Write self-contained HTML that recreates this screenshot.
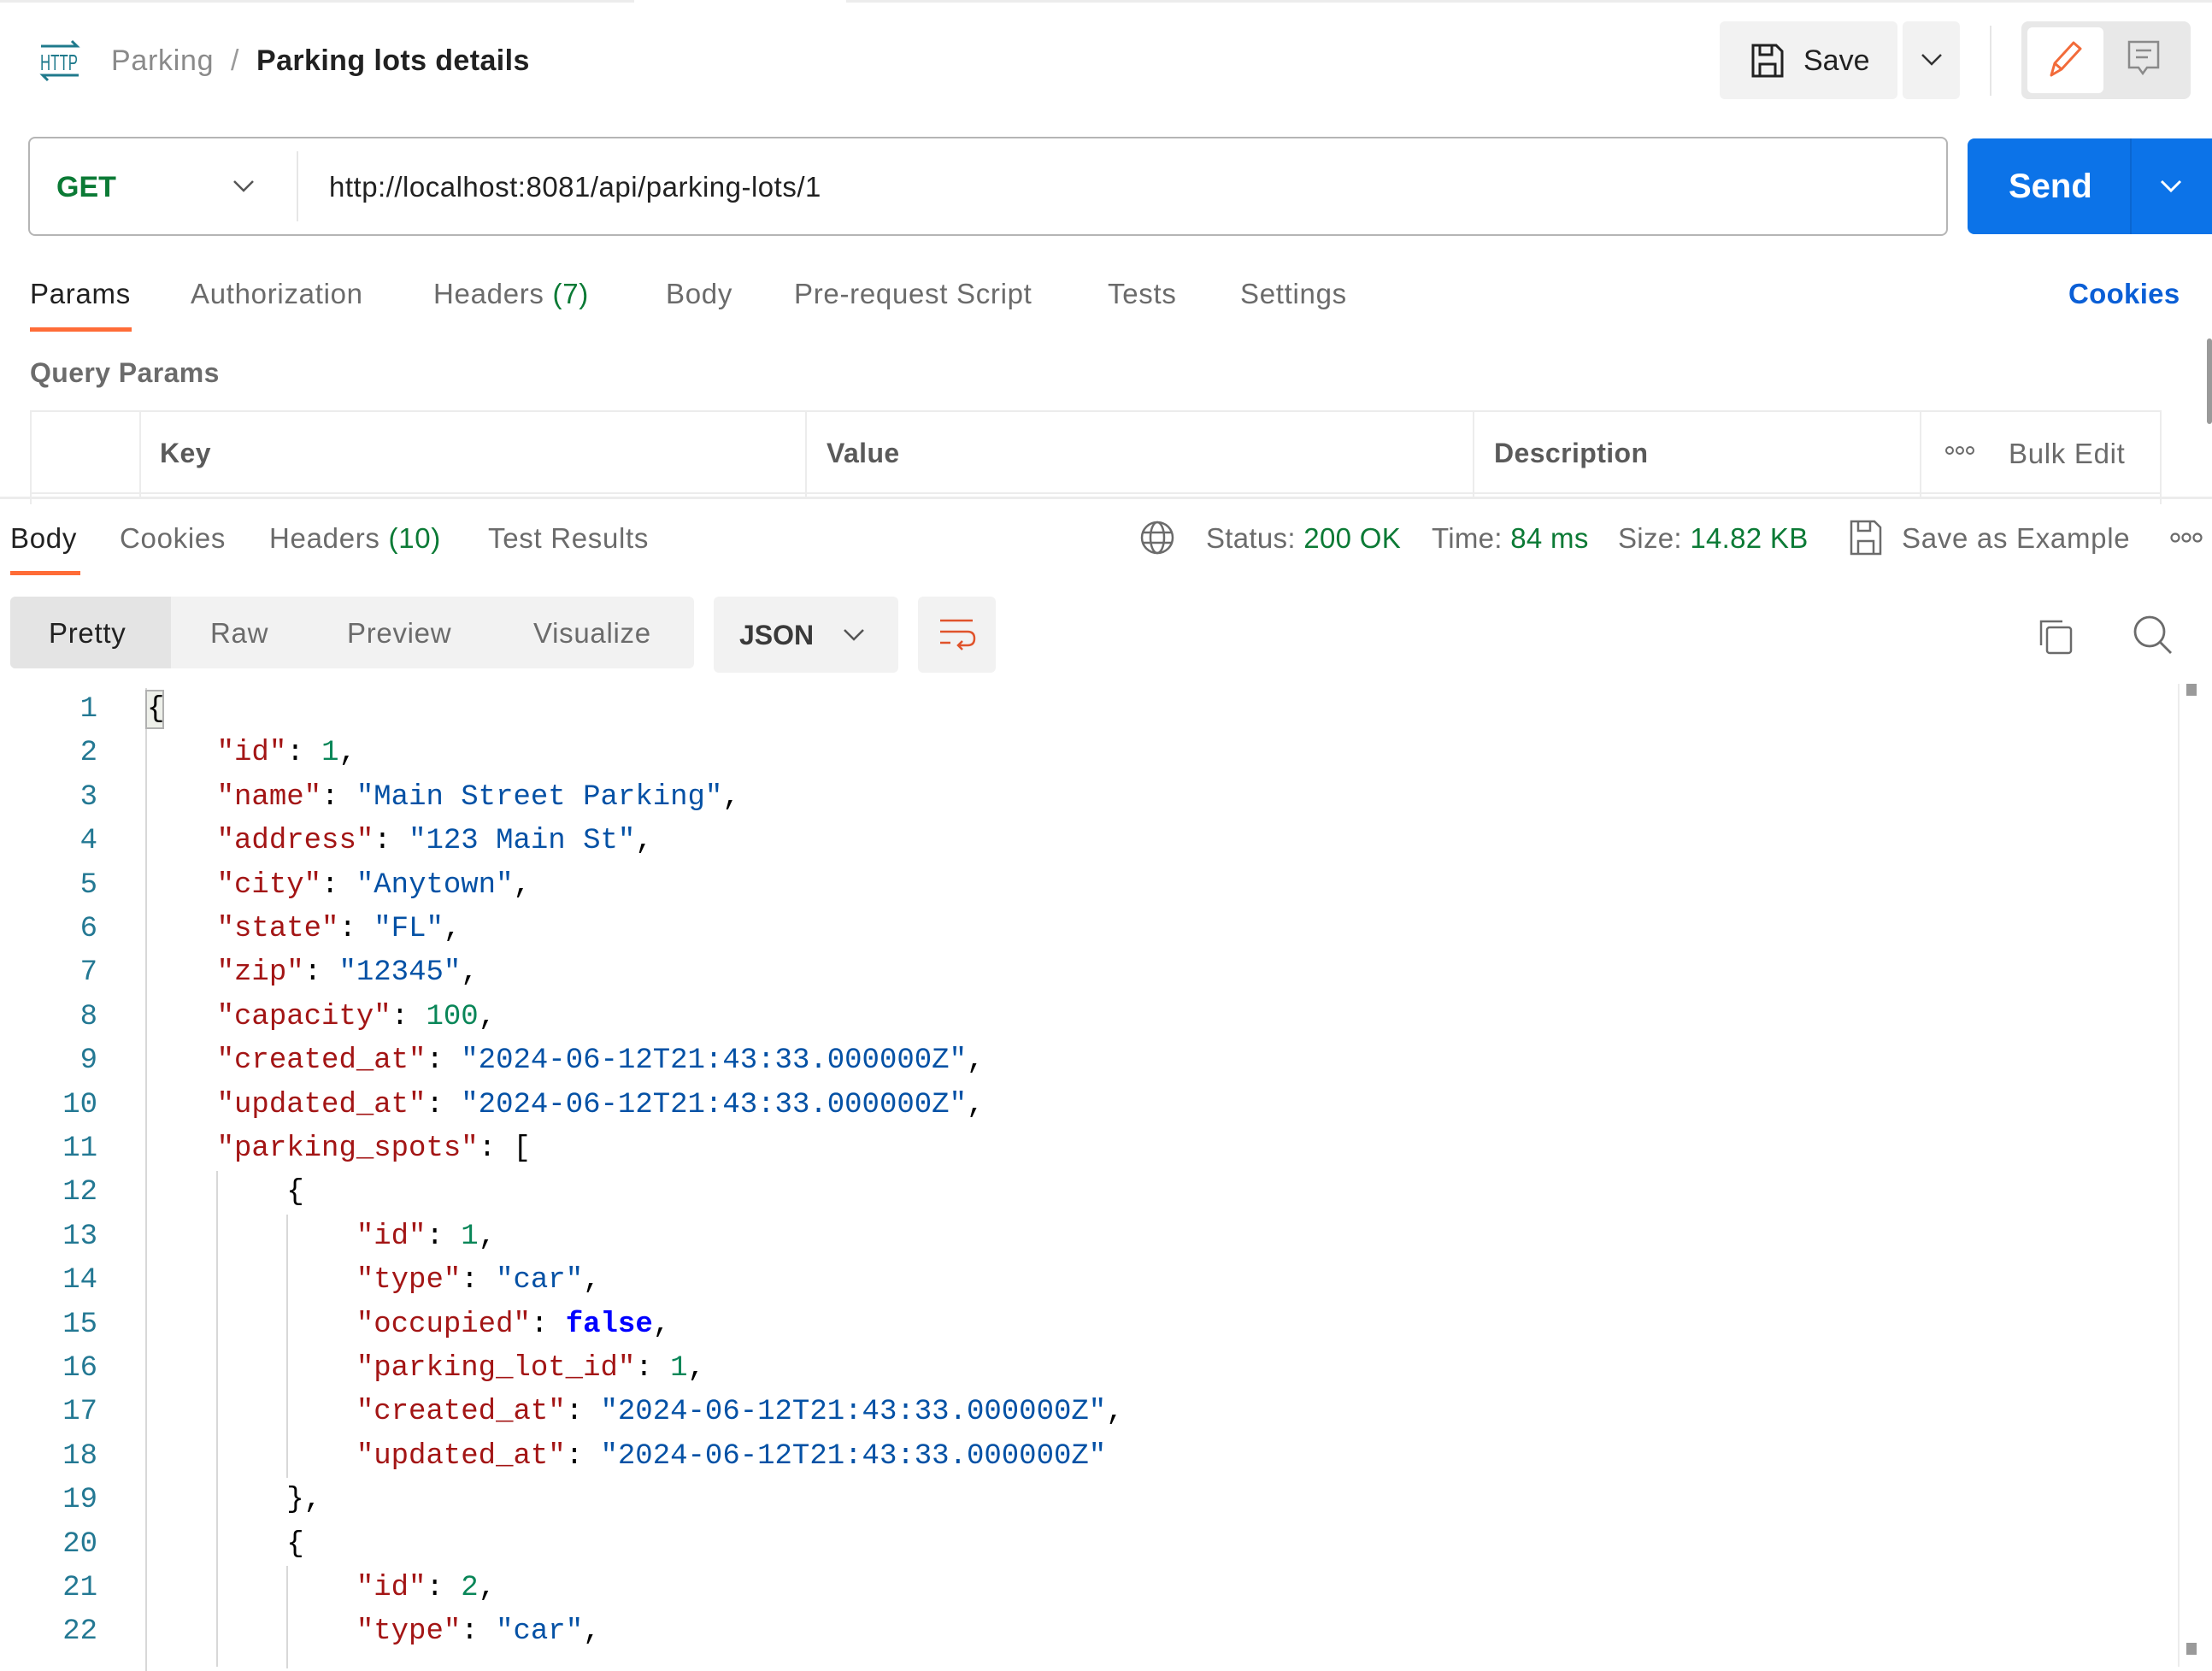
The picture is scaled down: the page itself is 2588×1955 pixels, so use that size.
<!DOCTYPE html>
<html><head><meta charset="utf-8"><style>
*{margin:0;padding:0;box-sizing:border-box}
body{width:2588px;height:1953px;background:#fff;position:relative;overflow:hidden;font-family:"Liberation Sans",sans-serif;color:#212121}
.a{position:absolute;white-space:nowrap}
.ui{font-size:33px;color:#6b6b6b;letter-spacing:0.7px}
.code{position:absolute;left:0;top:805px;font-family:"Liberation Mono",monospace;font-size:34px}
.ln{position:absolute;left:0;width:114px;text-align:right;color:#237893;height:51.4px;line-height:51.4px}
.cl{position:absolute;left:172px;height:51.4px;line-height:51.4px;white-space:pre;color:#000}
.k{color:#a31515}.s{color:#0451a5}.n{color:#098658}.b{color:#0000ff;font-weight:bold}
</style></head><body>
<div class="a" style="left:0;top:0;width:2588px;height:3px;background:#ececec"></div>
<div class="a" style="left:742px;top:0;width:248px;height:3px;background:#fff"></div>

<svg class="a" style="left:44px;top:46px" width="52" height="50" viewBox="0 0 52 50"><g stroke="#1f7a8c" stroke-width="3" fill="none"><path d="M4 8H46L40 2"/><path d="M48 42H6L12 48"/></g><text x="3" y="36" font-size="26" font-family="Liberation Sans" fill="#1f7a8c" textLength="44" lengthAdjust="spacingAndGlyphs">HTTP</text></svg>
<div class="a ui" style="left:130px;top:52px;font-size:34px;color:#8a8a8a">Parking</div>
<div class="a ui" style="left:270px;top:52px;font-size:34px;color:#9a9a9a">/</div>
<div class="a" style="left:300px;top:52px;font-size:34px;color:#212121;font-weight:bold;letter-spacing:0.4px">Parking lots details</div>

<div class="a" style="left:2012px;top:25px;width:208px;height:91px;background:#f2f2f2;border-radius:6px"></div>
<svg class="a" style="left:2048px;top:50px" width="40" height="42" viewBox="0 0 40 42"><g fill="none" stroke="#212121" stroke-width="3"><path d="M3 3H30L37 10V39H3Z"/><path d="M11 3V14H25V3"/><path d="M11 39V25H29V39"/></g></svg>
<div class="a" style="left:2110px;top:52px;font-size:34px;color:#212121">Save</div>
<div class="a" style="left:2226px;top:25px;width:67px;height:91px;background:#f2f2f2;border-radius:6px"></div>
<svg class="a" style="left:2247px;top:62px" width="26" height="16"><path d="M2 2L13 13L24 2" stroke="#333" stroke-width="2.5" fill="none"/></svg>
<div class="a" style="left:2328px;top:30px;width:2px;height:82px;background:#e6e6e6"></div>
<div class="a" style="left:2365px;top:25px;width:198px;height:91px;background:#e8e8e8;border-radius:8px"></div>
<div class="a" style="left:2372px;top:32px;width:89px;height:77px;background:#fff;border-radius:6px"></div>
<svg class="a" style="left:2394px;top:44px" width="44" height="50"><path d="M6 44L10 30L32 6L40 13L18 37Z M10 30L18 37" stroke="#f26b3a" stroke-width="3" fill="none" stroke-linejoin="round"/></svg>
<svg class="a" style="left:2488px;top:46px" width="40" height="48"><path d="M3 3H37V33H24L19 40L14 33H3Z M11 13H29 M11 21H25" stroke="#8a8a8a" stroke-width="2.5" fill="none"/></svg>

<div class="a" style="left:33px;top:160px;width:2246px;height:116px;border:2px solid #b5b5b5;border-radius:8px"></div>
<div class="a" style="left:66px;top:200px;font-size:34px;color:#0b7a35;font-weight:bold">GET</div>
<svg class="a" style="left:272px;top:210px" width="26" height="16"><path d="M2 2L13 13L24 2" stroke="#555" stroke-width="2.5" fill="none"/></svg>
<div class="a" style="left:347px;top:177px;width:2px;height:82px;background:#e6e6e6"></div>
<div class="a" style="left:385px;top:200px;font-size:33px;color:#212121;letter-spacing:0.5px">http://localhost:8081/api/parking-lots/1</div>
<div class="a" style="left:2302px;top:162px;width:286px;height:112px;background:#0c73e8;border-radius:8px 0 0 8px"></div>
<div class="a" style="left:2492px;top:162px;width:2px;height:112px;background:#0a66d0"></div>
<div class="a" style="left:2350px;top:196px;font-size:40px;color:#fff;font-weight:bold">Send</div>
<svg class="a" style="left:2527px;top:210px" width="26" height="16"><path d="M2 2L13 13L24 2" stroke="#fff" stroke-width="3" fill="none"/></svg>

<div class="a ui" style="left:35px;top:325px;color:#212121">Params</div>
<div class="a ui" style="left:223px;top:325px">Authorization</div>
<div class="a ui" style="left:507px;top:325px">Headers <span style="color:#0b7a35">(7)</span></div>
<div class="a ui" style="left:779px;top:325px">Body</div>
<div class="a ui" style="left:929px;top:325px">Pre-request Script</div>
<div class="a ui" style="left:1296px;top:325px">Tests</div>
<div class="a ui" style="left:1451px;top:325px">Settings</div>
<div class="a ui" style="left:2420px;top:325px;color:#0b5fd6;font-weight:bold;letter-spacing:0.3px">Cookies</div>
<div class="a" style="left:35px;top:383px;width:119px;height:5px;background:#ff6c37"></div>
<div class="a" style="left:35px;top:418px;font-size:32px;color:#6b6b6b;font-weight:bold;letter-spacing:0.4px">Query Params</div>
<div class="a" style="left:2582px;top:396px;width:6px;height:100px;background:#9a9a9a;border-radius:3px"></div>

<div class="a" style="left:35px;top:480px;width:2494px;height:110px;border:2px solid #ececec;border-bottom:none"></div>
<div class="a" style="left:163px;top:482px;width:2px;height:100px;background:#ececec"></div>
<div class="a" style="left:942px;top:482px;width:2px;height:100px;background:#ececec"></div>
<div class="a" style="left:1723px;top:482px;width:2px;height:100px;background:#ececec"></div>
<div class="a" style="left:2246px;top:482px;width:2px;height:100px;background:#ececec"></div>
<div class="a" style="left:35px;top:576px;width:2494px;height:2px;background:#ececec"></div>
<div class="a" style="left:187px;top:512px;font-size:32px;color:#5a5a5a;font-weight:bold;letter-spacing:0.4px">Key</div>
<div class="a" style="left:967px;top:512px;font-size:32px;color:#5a5a5a;font-weight:bold;letter-spacing:0.4px">Value</div>
<div class="a" style="left:1748px;top:512px;font-size:32px;color:#5a5a5a;font-weight:bold;letter-spacing:0.4px">Description</div>
<svg class="a" style="left:2275px;top:521px" width="36" height="12"><g fill="none" stroke="#6b6b6b" stroke-width="2"><circle cx="6" cy="6" r="4"/><circle cx="18" cy="6" r="4"/><circle cx="30" cy="6" r="4"/></g></svg>
<div class="a ui" style="left:2350px;top:512px">Bulk Edit</div>
<div class="a" style="left:0;top:581px;width:2588px;height:3px;background:#ececec"></div>

<div class="a ui" style="left:12px;top:611px;color:#212121">Body</div>
<div class="a ui" style="left:140px;top:611px">Cookies</div>
<div class="a ui" style="left:315px;top:611px">Headers <span style="color:#0b7a35">(10)</span></div>
<div class="a ui" style="left:571px;top:611px">Test Results</div>
<div class="a" style="left:12px;top:668px;width:82px;height:5px;background:#ff6c37"></div>
<svg class="a" style="left:1333px;top:608px" width="42" height="42" viewBox="0 0 42 42"><g fill="none" stroke="#6b6b6b" stroke-width="2.5"><circle cx="21" cy="21" r="18"/><ellipse cx="21" cy="21" rx="8" ry="18"/><path d="M4 15H38M4 27H38"/></g></svg>
<div class="a ui" style="left:1411px;top:611px;letter-spacing:0.3px">Status: <span style="color:#0b7a35">200 OK</span></div>
<div class="a ui" style="left:1675px;top:611px;letter-spacing:0.3px">Time: <span style="color:#0b7a35">84 ms</span></div>
<div class="a ui" style="left:1893px;top:611px;letter-spacing:0.3px">Size: <span style="color:#0b7a35">14.82 KB</span></div>
<svg class="a" style="left:2163px;top:607px" width="40" height="44"><g fill="none" stroke="#6b6b6b" stroke-width="2.5"><path d="M3 3H30L37 10V41H3Z"/><path d="M11 3V14H25V3"/><path d="M11 41V26H29V41"/></g></svg>
<div class="a ui" style="left:2225px;top:611px">Save as Example</div>
<svg class="a" style="left:2538px;top:622px" width="40" height="14"><g fill="none" stroke="#6b6b6b" stroke-width="2.2"><circle cx="7" cy="7" r="4.5"/><circle cx="20" cy="7" r="4.5"/><circle cx="33" cy="7" r="4.5"/></g></svg>

<div class="a" style="left:12px;top:698px;width:800px;height:84px;background:#f2f2f2;border-radius:6px"></div>
<div class="a" style="left:12px;top:698px;width:188px;height:84px;background:#e4e4e4;border-radius:6px 0 0 6px"></div>
<div class="a ui" style="left:57px;top:722px;color:#212121">Pretty</div>
<div class="a ui" style="left:246px;top:722px">Raw</div>
<div class="a ui" style="left:406px;top:722px">Preview</div>
<div class="a ui" style="left:624px;top:722px">Visualize</div>
<div class="a" style="left:835px;top:698px;width:216px;height:89px;background:#f2f2f2;border-radius:6px"></div>
<div class="a" style="left:865px;top:725px;font-size:32px;color:#3a3a3a;font-weight:bold">JSON</div>
<svg class="a" style="left:986px;top:735px" width="26" height="16"><path d="M2 2L13 13L24 2" stroke="#555" stroke-width="2.5" fill="none"/></svg>
<div class="a" style="left:1074px;top:698px;width:91px;height:89px;background:#f2f2f2;border-radius:6px"></div>
<svg class="a" style="left:1098px;top:722px" width="44" height="40"><g fill="none" stroke="#e0532b" stroke-width="2.5"><path d="M2 4H40M2 17H34Q42 17 42 25Q42 33 34 33H24M28 28L23 33L28 38M2 30H14"/></g></svg>
<svg class="a" style="left:2383px;top:722px" width="44" height="44"><g fill="none" stroke="#6b6b6b" stroke-width="2.5"><rect x="12" y="12" width="28" height="30" rx="3"/><path d="M30 5H5V33"/></g></svg>
<svg class="a" style="left:2495px;top:719px" width="48" height="48"><g fill="none" stroke="#6b6b6b" stroke-width="2.8"><circle cx="20" cy="20" r="17"/><path d="M32 32L45 45"/></g></svg>

<div class="a" style="left:2548px;top:800px;width:2px;height:1150px;background:#ececec"></div>
<div class="a" style="left:2558px;top:800px;width:12px;height:14px;background:#9a9a9a"></div>
<div class="a" style="left:2558px;top:1922px;width:12px;height:14px;background:#9a9a9a"></div>
<div class="a" style="left:170px;top:805px;width:2px;height:1150px;background:#d8d8d8"></div>
<div class="a" style="left:253px;top:1370px;width:2px;height:580px;background:#d8d8d8"></div>
<div class="a" style="left:335px;top:1421px;width:2px;height:308px;background:#d8d8d8"></div>
<div class="a" style="left:335px;top:1832px;width:2px;height:120px;background:#d8d8d8"></div>
<div class="a" style="left:170px;top:807px;width:22px;height:46px;border:2px solid #b0b0b0;background:#eef0ea"></div>
<div class="code">
<div class="ln" style="top:0">1</div><div class="cl" style="top:0">{</div>
<div class="ln" style="top:51.4px">2</div><div class="cl" style="top:51.4px">    <span class="k">"id"</span>: <span class="n">1</span>,</div>
<div class="ln" style="top:102.8px">3</div><div class="cl" style="top:102.8px">    <span class="k">"name"</span>: <span class="s">"Main Street Parking"</span>,</div>
<div class="ln" style="top:154.2px">4</div><div class="cl" style="top:154.2px">    <span class="k">"address"</span>: <span class="s">"123 Main St"</span>,</div>
<div class="ln" style="top:205.6px">5</div><div class="cl" style="top:205.6px">    <span class="k">"city"</span>: <span class="s">"Anytown"</span>,</div>
<div class="ln" style="top:257px">6</div><div class="cl" style="top:257px">    <span class="k">"state"</span>: <span class="s">"FL"</span>,</div>
<div class="ln" style="top:308.4px">7</div><div class="cl" style="top:308.4px">    <span class="k">"zip"</span>: <span class="s">"12345"</span>,</div>
<div class="ln" style="top:359.8px">8</div><div class="cl" style="top:359.8px">    <span class="k">"capacity"</span>: <span class="n">100</span>,</div>
<div class="ln" style="top:411.2px">9</div><div class="cl" style="top:411.2px">    <span class="k">"created_at"</span>: <span class="s">"2024-06-12T21:43:33.000000Z"</span>,</div>
<div class="ln" style="top:462.6px">10</div><div class="cl" style="top:462.6px">    <span class="k">"updated_at"</span>: <span class="s">"2024-06-12T21:43:33.000000Z"</span>,</div>
<div class="ln" style="top:514px">11</div><div class="cl" style="top:514px">    <span class="k">"parking_spots"</span>: [</div>
<div class="ln" style="top:565.4px">12</div><div class="cl" style="top:565.4px">        {</div>
<div class="ln" style="top:616.8px">13</div><div class="cl" style="top:616.8px">            <span class="k">"id"</span>: <span class="n">1</span>,</div>
<div class="ln" style="top:668.2px">14</div><div class="cl" style="top:668.2px">            <span class="k">"type"</span>: <span class="s">"car"</span>,</div>
<div class="ln" style="top:719.6px">15</div><div class="cl" style="top:719.6px">            <span class="k">"occupied"</span>: <span class="b">false</span>,</div>
<div class="ln" style="top:771px">16</div><div class="cl" style="top:771px">            <span class="k">"parking_lot_id"</span>: <span class="n">1</span>,</div>
<div class="ln" style="top:822.4px">17</div><div class="cl" style="top:822.4px">            <span class="k">"created_at"</span>: <span class="s">"2024-06-12T21:43:33.000000Z"</span>,</div>
<div class="ln" style="top:873.8px">18</div><div class="cl" style="top:873.8px">            <span class="k">"updated_at"</span>: <span class="s">"2024-06-12T21:43:33.000000Z"</span></div>
<div class="ln" style="top:925.2px">19</div><div class="cl" style="top:925.2px">        },</div>
<div class="ln" style="top:976.6px">20</div><div class="cl" style="top:976.6px">        {</div>
<div class="ln" style="top:1028px">21</div><div class="cl" style="top:1028px">            <span class="k">"id"</span>: <span class="n">2</span>,</div>
<div class="ln" style="top:1079.4px">22</div><div class="cl" style="top:1079.4px">            <span class="k">"type"</span>: <span class="s">"car"</span>,</div>
</div>
</body></html>
